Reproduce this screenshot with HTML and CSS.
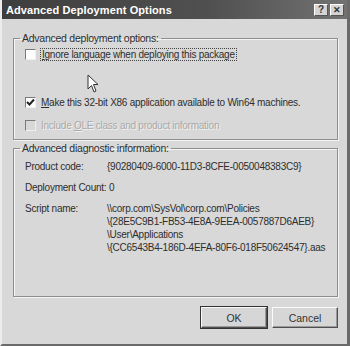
FILE: index.html
```html
<!DOCTYPE html>
<html lang="en">
<head>
    <meta charset="UTF-8">
    <title>Advanced Deployment Options</title>
    <link rel="stylesheet" href="styles.css">
</head>
<body>

    <div class="window">
        <div class="titlebar">
            <span class="title">Advanced Deployment Options</span>
            <div class="caption-btns">
                <button class="cap">?</button>
                <button class="cap close">&#x2715;</button>
            </div>
        </div>

        <div class="content">
            <fieldset class="group group-top">
                <legend>Advanced deployment options:</legend>
                <label class="check first">
                    <span class="box"></span>
                    <span class="focus"><u>I</u>gnore language when deploying this package</span>
                </label>
                <label class="check second">
                    <span class="box checked">
                        <svg width="9" height="9" viewBox="0 0 9 9"><path d="M1 4 L3.5 6.5 L8 1.5" fill="none" stroke="#222" stroke-width="2"/></svg>
                    </span>
                    <span><u>M</u>ake this 32-bit X86 application available to Win64 machines.</span>
                </label>
                <label class="check disabled">
                    <span class="box"></span>
                    <span>Include <u>O</u>LE class and product information</span>
                </label>
            </fieldset>

            <fieldset class="group group-info">
                <legend>Advanced diagnostic information:</legend>
                <div class="row">
                    <span class="label">Product code:</span>
                    <span class="value">{90280409-6000-11D3-8CFE-0050048383C9}</span>
                </div>
                <div class="row">
                    <span>Deployment Count: 0</span>
                </div>
                <div class="row">
                    <span class="label">Script name:</span>
                    <span class="value script">\\corp.com\SysVol\corp.com\Policies<br>\{28E5C9B1-FB53-4E8A-9EEA-0057887D6AEB}<br>\User\Applications<br>\{CC6543B4-186D-4EFA-80F6-018F50624547}.aas</span>
                </div>
            </fieldset>

            <div class="buttons">
                <button class="btn default">OK</button>
                <button class="btn">Cancel</button>
            </div>
        </div>

        <svg class="cursor" width="12" height="20" viewBox="0 0 12 20">
            <path d="M1 1 L1 15 L4.5 11.5 L7 18 L9 17 L6.5 10.5 L11 10.5 Z" fill="#fff" stroke="#333" stroke-width="1"/>
        </svg>
    </div>

</body>
</html>
```

FILE: styles.css
```css
body {
    margin: 0;
    font-family: 'Liberation Sans', Arial, sans-serif;
    font-size: 10px;
    letter-spacing: -0.25px;
    color: #2e2e2e;
    background: #d6d6d6;
}
.window {
    position: relative;
    width: 350px;
    height: 346px;
    box-sizing: border-box;
    background: #d8d8d8;
    border-left: 2px solid #ececec;
    border-right: 3px solid #6a6a6a;
    border-bottom: 2px solid #6a6a6a;
}
.titlebar {
    height: 19px;
    display: flex;
    align-items: center;
    justify-content: space-between;
    background: linear-gradient(to right, #3e3e3e, #505050 60%, #727272);
    padding: 0 3px 0 4px;
}
.title {
    color: #fff;
    font-weight: bold;
    font-size: 11px;
    letter-spacing: 0.1px;
}
.caption-btns { display: flex; gap: 2px; }
.cap {
    width: 14px;
    height: 12px;
    padding: 0;
    font-family: 'Liberation Sans', Arial, sans-serif;
    font-size: 10px;
    font-weight: bold;
    line-height: 10px;
    color: #333;
    background: #d4d4d4;
    border: 1px solid;
    border-color: #fff #555 #555 #fff;
}
.close { font-size: 9px; }
.content {
    padding: 13px 9px 0 11px;
}
.group {
    margin: 0;
    padding: 0 0 0 11px;
    border: 1px solid #8e8e8e;
    box-shadow: 1px 1px 0 #f4f4f4, inset 1px 1px 0 #f4f4f4;
    min-width: 0;
}
.group legend {
    padding: 0 2px;
    margin-left: -5px;
    font-size: 10.5px;
}
.group-top { height: 106px; }
.check {
    display: flex;
    align-items: center;
    gap: 5px;
    height: 12px;
}
.check.first { margin-top: 4px; }
.check.second { margin-top: 36px; }
.check.disabled { margin-top: 11px; color: #a9a9a9; text-shadow: 1px 1px 0 #f2f2f2; }
.box {
    width: 9px;
    height: 9px;
    display: flex;
    align-items: center;
    justify-content: center;
    background: #fdfdfd;
    border: 1px solid;
    border-color: #7a7a7a #f0f0f0 #f0f0f0 #7a7a7a;
}
.disabled .box { background: #d8d8d8; }
.focus {
    outline: 1px dotted #444;
    padding: 0 1px;
}
.group-info {
    margin-top: 2px;
    height: 153px;
}
.row {
    display: flex;
    margin-top: 8px;
    line-height: 13px;
}
.row:first-of-type { margin-top: 6px; }
.label { width: 82px; }
.buttons {
    display: flex;
    justify-content: flex-end;
    gap: 5px;
    margin-top: 10px;
}
.btn {
    width: 66px;
    height: 21px;
    font-family: 'Liberation Sans', Arial, sans-serif;
    font-size: 10.5px;
    color: #333;
    background: #d6d6d6;
    border: 1px solid;
    border-color: #fafafa #505050 #505050 #fafafa;
    box-shadow: inset -1px -1px 0 #9a9a9a;
}
.btn.default { outline: 1px solid #333; outline-offset: 0; }
.cursor {
    position: absolute;
    left: 85px;
    top: 74px;
}
```
